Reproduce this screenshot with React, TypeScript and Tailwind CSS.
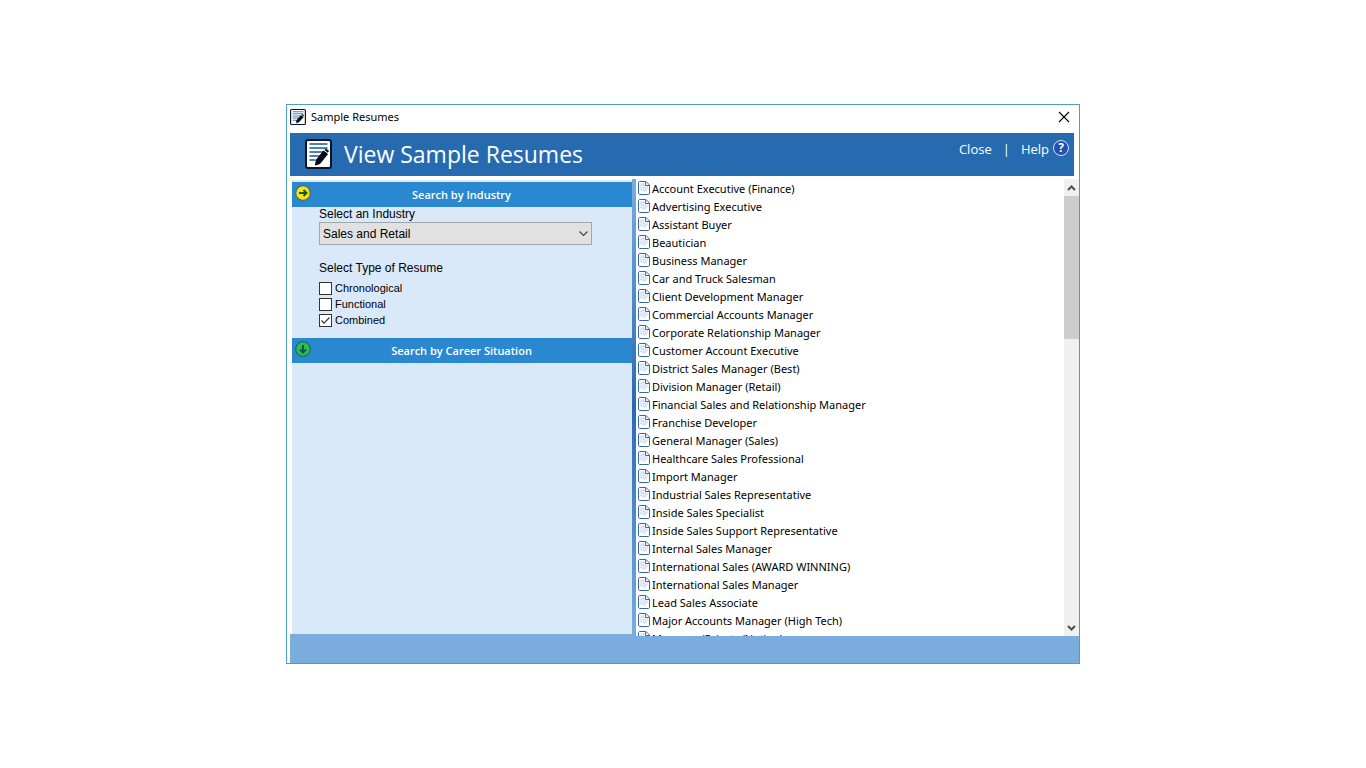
import { useState } from "react";

const industries = ["Sales and Retail", "Finance", "Healthcare", "Information Technology"];

const resumeTypes = ["Chronological", "Functional", "Combined"];

const resumes = [
  "Account Executive (Finance)",
  "Advertising Executive",
  "Assistant Buyer",
  "Beautician",
  "Business Manager",
  "Car and Truck Salesman",
  "Client Development Manager",
  "Commercial Accounts Manager",
  "Corporate Relationship Manager",
  "Customer Account Executive",
  "District Sales Manager (Best)",
  "Division Manager (Retail)",
  "Financial Sales and Relationship Manager",
  "Franchise Developer",
  "General Manager (Sales)",
  "Healthcare Sales Professional",
  "Import Manager",
  "Industrial Sales Representative",
  "Inside Sales Specialist",
  "Inside Sales Support Representative",
  "Internal Sales Manager",
  "International Sales (AWARD WINNING)",
  "International Sales Manager",
  "Lead Sales Associate",
  "Major Accounts Manager (High Tech)",
  "Manager (Private/Nation)",
];

function LogoIcon({ className }: { className: string }) {
  return (
    <svg className={className} viewBox="0 0 27 30" preserveAspectRatio="none" aria-hidden="true">
      <rect x="1" y="1" width="25" height="28" rx="2" fill="#fff" stroke="#0b1622" strokeWidth="2" />
      <path d="M4.500 5h18M4.500 9h18M4.500 13h14M4.500 17h11M4.500 21h6" stroke="#4d82b4" strokeWidth="2" />
      <path d="M18.500 12l4 3-7.500 9.500-4.500 1.500.8-5z" fill="#050b14" stroke="#050b14" />
      <path d="M19.500 11l1.500-1.500 3 2.500-1.200 1.700z" fill="#050b14" />
    </svg>
  );
}

function FileIcon() {
  return (
    <svg className="mt-px h-[14px] w-3 shrink-0" viewBox="0 0 12 14" aria-hidden="true">
      <path d="M2 .5h6L11.500 4v8c0 1-.5 1.500-1.500 1.500H2C1 13.500.5 13 .5 12V2C.5 1 1 .5 2 .5z" fill="#fff" stroke="#3668ac" />
      <path d="M2 2h5v3h3v3L7 11 2 9z" fill="#e4ebfa" />
      <path d="M3 4h1v1H3zM5 3h1v1H5zM5 6h1v1H5zM3 8h1v1H3zM7 7h1v1H7zM6 9h1v1H6z" fill="#bccaf0" />
      <path d="M7.500.5v4h4" fill="none" stroke="#3668ac" />
    </svg>
  );
}

function ArrowBadge({ open }: { open: boolean }) {
  return (
    <svg className="mt-[3px] h-4 w-4 shrink-0" viewBox="0 0 16 16" aria-hidden="true">
      <circle cx="8" cy="8" r="7.300" fill={open ? "#f3e51d" : "#2fbb50"} stroke={open ? "#4c7148" : "#11705c"} strokeWidth="1.200" />
      <path
        d={open ? "M4 8h7M8.500 5l3 3-3 3" : "M8 4v7M5 8.500l3 3 3-3"}
        fill="none"
        stroke={open ? "#25512f" : "#08584f"}
        strokeWidth="2"
      />
    </svg>
  );
}

function SectionHeader({ title, open }: { title: string; open: boolean }) {
  return (
    <button
      type="button"
      aria-expanded={open}
      className="flex h-[25px] w-full items-start bg-[#2a88d1] pr-5 pl-[3px] font-['Open_Sans',sans-serif] text-[11px] font-semibold text-white"
    >
      <ArrowBadge open={open} />
      <span className="flex-1 text-center leading-[26px]">{title}</span>
    </button>
  );
}

function SearchPanel() {
  const [industry, setIndustry] = useState(industries[0]);
  const [selected, setSelected] = useState(["Combined"]);

  const toggle = (type: string) =>
    setSelected((prev) => (prev.includes(type) ? prev.filter((t) => t !== type) : [...prev, type]));

  return (
    <section className="mt-px ml-[2px] w-[340px] shrink-0 bg-[#d9e9f9] pt-[2px]">
      <SectionHeader title="Search by Industry" open />
      <div className="h-[131px] pr-10 pl-[27px] font-['Liberation_Sans',Arial,sans-serif] text-[12px] text-black">
        <label htmlFor="industry" className="block leading-[15px]">
          Select an Industry
        </label>
        <div className="relative">
          <select
            id="industry"
            value={industry}
            onChange={(e) => setIndustry(e.target.value)}
            className="block h-[23px] w-full appearance-none border border-[#a3a7ab] bg-[#e1e1e1] px-[3px] text-[12px]"
          >
            {industries.map((name) => (
              <option key={name}>{name}</option>
            ))}
          </select>
          <svg className="pointer-events-none absolute top-2 right-1 h-[7px] w-[9px]" viewBox="0 0 9 7" aria-hidden="true">
            <path d="M.5 1.500l4 4 4-4" fill="none" stroke="#444" strokeWidth="1.200" />
          </svg>
        </div>

        <fieldset className="mt-[15px]">
          <legend className="mb-1 leading-4">Select Type of Resume</legend>
          {resumeTypes.map((type) => (
            <label key={type} className="relative flex h-4 items-center gap-[3px] text-[11px]">
              <input
                type="checkbox"
                checked={selected.includes(type)}
                onChange={() => toggle(type)}
                className="peer h-[13px] w-[13px] appearance-none border border-[#333] bg-white"
              />
              <svg className="pointer-events-none absolute left-0 hidden h-[13px] w-[13px] peer-checked:block" viewBox="0 0 13 13" aria-hidden="true">
                <path d="M2.500 6.500L5 9.200l5.500-5.700" fill="none" stroke="#333" strokeWidth="1.200" />
              </svg>
              {type}
            </label>
          ))}
        </fieldset>
      </div>
      <SectionHeader title="Search by Career Situation" open={false} />
    </section>
  );
}

function ScrollBar() {
  return (
    <div className="flex w-[15px] shrink-0 flex-col bg-[#f0f0f0]">
      <button type="button" aria-label="Scroll up" className="flex h-[17px] items-center justify-center">
        <svg className="h-[6px] w-[9px]" viewBox="0 0 9 6" aria-hidden="true">
          <path d="M1 5l3.500-3.500L8 5" fill="none" stroke="#505050" strokeWidth="2" />
        </svg>
      </button>
      <div className="h-[143px] bg-[#cdcdcd]" />
      <button type="button" aria-label="Scroll down" className="mt-auto flex h-[17px] items-center justify-center">
        <svg className="h-[6px] w-[9px]" viewBox="0 0 9 6" aria-hidden="true">
          <path d="M1 1l3.500 3.500L8 1" fill="none" stroke="#505050" strokeWidth="2" />
        </svg>
      </button>
    </div>
  );
}

export default function App() {
  return (
    <div className="flex min-h-screen items-center justify-center bg-white font-['Noto_Sans','Open_Sans',sans-serif]">
      <main className="w-full max-w-[794px] border border-[#4c9fc0] bg-white">
        <div className="flex h-7 items-center gap-[5px] pr-[9px] pb-1 pl-[3px]">
          <LogoIcon className="h-4 w-4" />
          <span className="text-[11px] leading-4 text-black">Sample Resumes</span>
          <button type="button" aria-label="Close window" className="ml-auto">
            <svg className="h-3 w-3" viewBox="0 0 12 12" aria-hidden="true">
              <path d="M1 1l10 10M11 1L1 11" stroke="#000" strokeWidth="1.100" />
            </svg>
          </button>
        </div>

        <header className="mr-[5px] ml-[3px] flex h-[43px] items-center bg-[#266bb0] pr-[5px] pb-[2px] pl-[15px] text-white">
          <LogoIcon className="h-[30px] w-[27px]" />
          <h1 className="ml-3 font-['Open_Sans',sans-serif] text-[23px] leading-8">View Sample Resumes</h1>
          <nav className="ml-auto flex items-center self-start pt-[7px] font-['Open_Sans',sans-serif] text-[13px] leading-[18px]">
            <a href="#close">Close</a>
            <span className="mx-[11px]">|</span>
            <a href="#help" className="flex items-start gap-1">
              Help
              <span className="flex h-4 w-4 items-center justify-center rounded-full border border-[#d6e2f8] bg-[#2250ae] text-[12px] font-bold">
                ?
              </span>
            </a>
          </nav>
        </header>

        <div className="mt-[3px] ml-[3px] bg-[#7aaddd]">
          <div className="flex h-[457px]">
            <div className="mb-[2px] flex bg-white">
              <SearchPanel />
            </div>
            <div className="w-1 shrink-0 bg-linear-to-b from-[#7aaddd] via-[#266bb0] to-[#7aaddd]" />
            <ul className="min-w-0 flex-1 overflow-hidden bg-white pt-px pl-[2px]">
              {resumes.map((name) => (
                <li key={name}>
                  <a href="#resume" className="flex h-[18px] items-start gap-[2px] text-[11px] leading-[18px] text-black">
                    <FileIcon />
                    {name}
                  </a>
                </li>
              ))}
            </ul>
            <ScrollBar />
          </div>
          <footer className="h-[27px]" />
        </div>
      </main>
    </div>
  );
}
